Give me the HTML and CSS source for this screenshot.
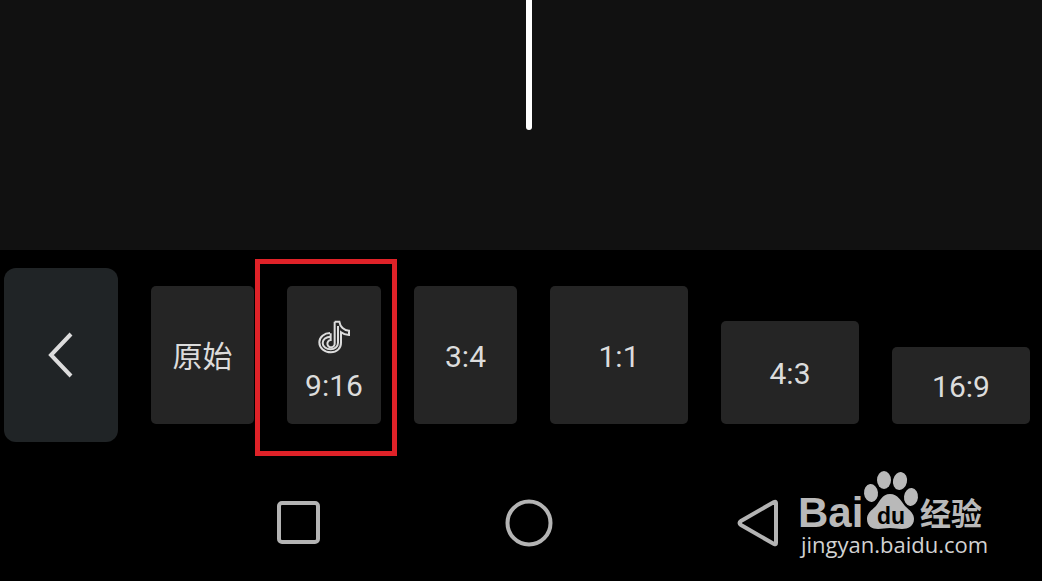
FILE: index.html
```html
<!DOCTYPE html>
<html lang="zh-CN">
    <head>
        <meta charset="UTF-8" />
        <meta name="viewport" content="width=device-width, initial-scale=1.0" />
        <title>画面比例</title>
        <link rel="stylesheet" href="styles.css">
    </head>
    <body>
        <main class="preview">
            <div class="playhead"></div>
        </main>
        <div class="ratio-bar">
            <button class="back-btn" type="button" aria-label="返回">
                <svg width="26" height="48" viewBox="0 0 26 48">
                    <path d="M23 3 3 24 23 45" />
                </svg>
            </button>
            <button class="ratio portrait" type="button">原始</button>
            <button class="ratio tall selected" type="button">
                <svg class="note-icon" width="32" height="34" viewBox="22 24 96 102">
                    <path d="M72 29H86C88 44 100 55 115 56V69C105 69 97 66 91 61V92C91 109 78 121 61 121C41 121 26 108 26 91C26 75 41 63 58 63" />
                    <path d="M60 74C46 74 36 83 36 93C36 104 47 112 60 112C72 112 82 104 82 92V42" />
                    <path d="M72 29V93A11 11 0 1 1 60 84V64" />
                </svg>
                9:16
            </button>
            <button class="ratio portrait" type="button">3:4</button>
            <button class="ratio square" type="button">1:1</button>
            <button class="ratio landscape" type="button">4:3</button>
            <button class="ratio wide" type="button">16:9</button>
        </div>
        <nav class="system-nav">
            <button type="button" aria-label="最近任务">
                <svg width="48" height="48" viewBox="0 0 48 48">
                    <rect x="4" y="4" width="39" height="39" rx="3" />
                </svg>
            </button>
            <button type="button" aria-label="主屏幕">
                <svg width="48" height="48" viewBox="0 0 48 48">
                    <circle cx="24" cy="24" r="21.5" />
                </svg>
            </button>
            <button type="button" aria-label="返回上一页">
                <svg width="48" height="48" viewBox="0 0 48 48">
                    <path d="M41 4V44Q41 46 39 45L6 26Q3 24 6 22L39 3Q41 2 41 4Z" />
                </svg>
            </button>
        </nav>
        <svg class="watermark" width="210" height="100" viewBox="0 0 210 100">
            <text class="brand" x="8" y="67">Bai</text>
            <ellipse cx="81" cy="33" rx="7" ry="9" transform="rotate(-6 81 33)" />
            <ellipse cx="94" cy="20" rx="7" ry="9" />
            <ellipse cx="110" cy="21" rx="7" ry="9" transform="rotate(12 110 21)" />
            <ellipse cx="121" cy="37" rx="7" ry="9" transform="rotate(6 121 37)" />
            <path d="M100 34C108 34 111 41 115 46C119 50 124 53 124 59C124 66 118 69 112 69C107 69 105 68 100 68C95 68 93 69 88 69C82 69 77 66 77 59C77 53 82 50 86 46C90 41 92 34 100 34Z" />
            <text class="du" x="87" y="64">du</text>
            <text class="section" x="130" y="65">经验</text>
            <text class="site" x="11" y="93">jingyan.baidu.com</text>
        </svg>
    </body>
</html>
```
FILE: styles.css
```css
* {
    box-sizing: border-box;
}

body {
    position: relative;
    display: flex;
    flex-direction: column;
    min-height: 100vh;
    margin: 0;
    background-color: #000;
    color: #dcdcdc;
    font-family: Roboto, 'Noto Sans CJK SC', sans-serif;
}

button {
    padding: 0;
    border: none;
    background: none;
    color: inherit;
    font: inherit;
    cursor: pointer;
}

svg {
    display: block;
}

.preview {
    flex: 1;
    display: flex;
    justify-content: center;
    padding-left: 16px;
    background-color: #111;
}

.playhead {
    width: 6px;
    height: 130px;
    border-radius: 0 0 3px 3px;
    background-color: #fff;
}

/* ratio picker */
.ratio-bar {
    display: flex;
    align-items: flex-end;
    gap: 33px;
    padding: 18px 12px 0 4px;
}

.back-btn {
    flex: 114 1 0;
    display: flex;
    align-items: center;
    justify-content: center;
    height: 174px;
    border-radius: 12px;
    background-color: #202426;
}

.back-btn path {
    fill: none;
    stroke: #dcdcdc;
    stroke-width: 4;
}

.ratio {
    position: relative;
    display: flex;
    flex-direction: column;
    align-items: center;
    justify-content: center;
    gap: 14px;
    height: 138px;
    margin-bottom: 18px;
    padding-top: 4px;
    border-radius: 5px;
    background-color: #252525;
    font-size: 30px;
    line-height: 36px;
}

.portrait {
    flex: 103 1 0;
}

.tall {
    flex: 94 1 0;
    padding-top: 14px;
}

.square,
.landscape,
.wide {
    flex: 138 1 0;
}

.landscape,
.wide {
    padding-top: 2px;
}

.landscape {
    height: 103px;
}

.wide {
    height: 77px;
}

.selected::after {
    content: '';
    position: absolute;
    inset: -27px -16px -32px -32px;
    border: 5px solid #df2228;
}

.note-icon {
    fill: none;
    stroke: #dcdcdc;
    stroke-width: 6;
}

/* system navigation */
.system-nav {
    display: flex;
    justify-content: center;
    gap: 182px;
    padding: 57px 0 34px 15px;
}

.system-nav svg {
    fill: none;
    stroke: #b4b4b4;
    stroke-width: 4;
}

.watermark {
    position: absolute;
    right: 42px;
    bottom: 21px;
    fill: #b9b9b9;
}

.brand {
    font: bold 42px 'Liberation Sans', sans-serif;
}

.du {
    fill: #000;
    font: bold 23px 'Liberation Sans', sans-serif;
}

.section {
    font: bold 31px 'Noto Sans CJK SC', sans-serif;
}

.site {
    fill: #d2d2d2;
    font: 500 22px 'Open Sans', sans-serif;
}
```
